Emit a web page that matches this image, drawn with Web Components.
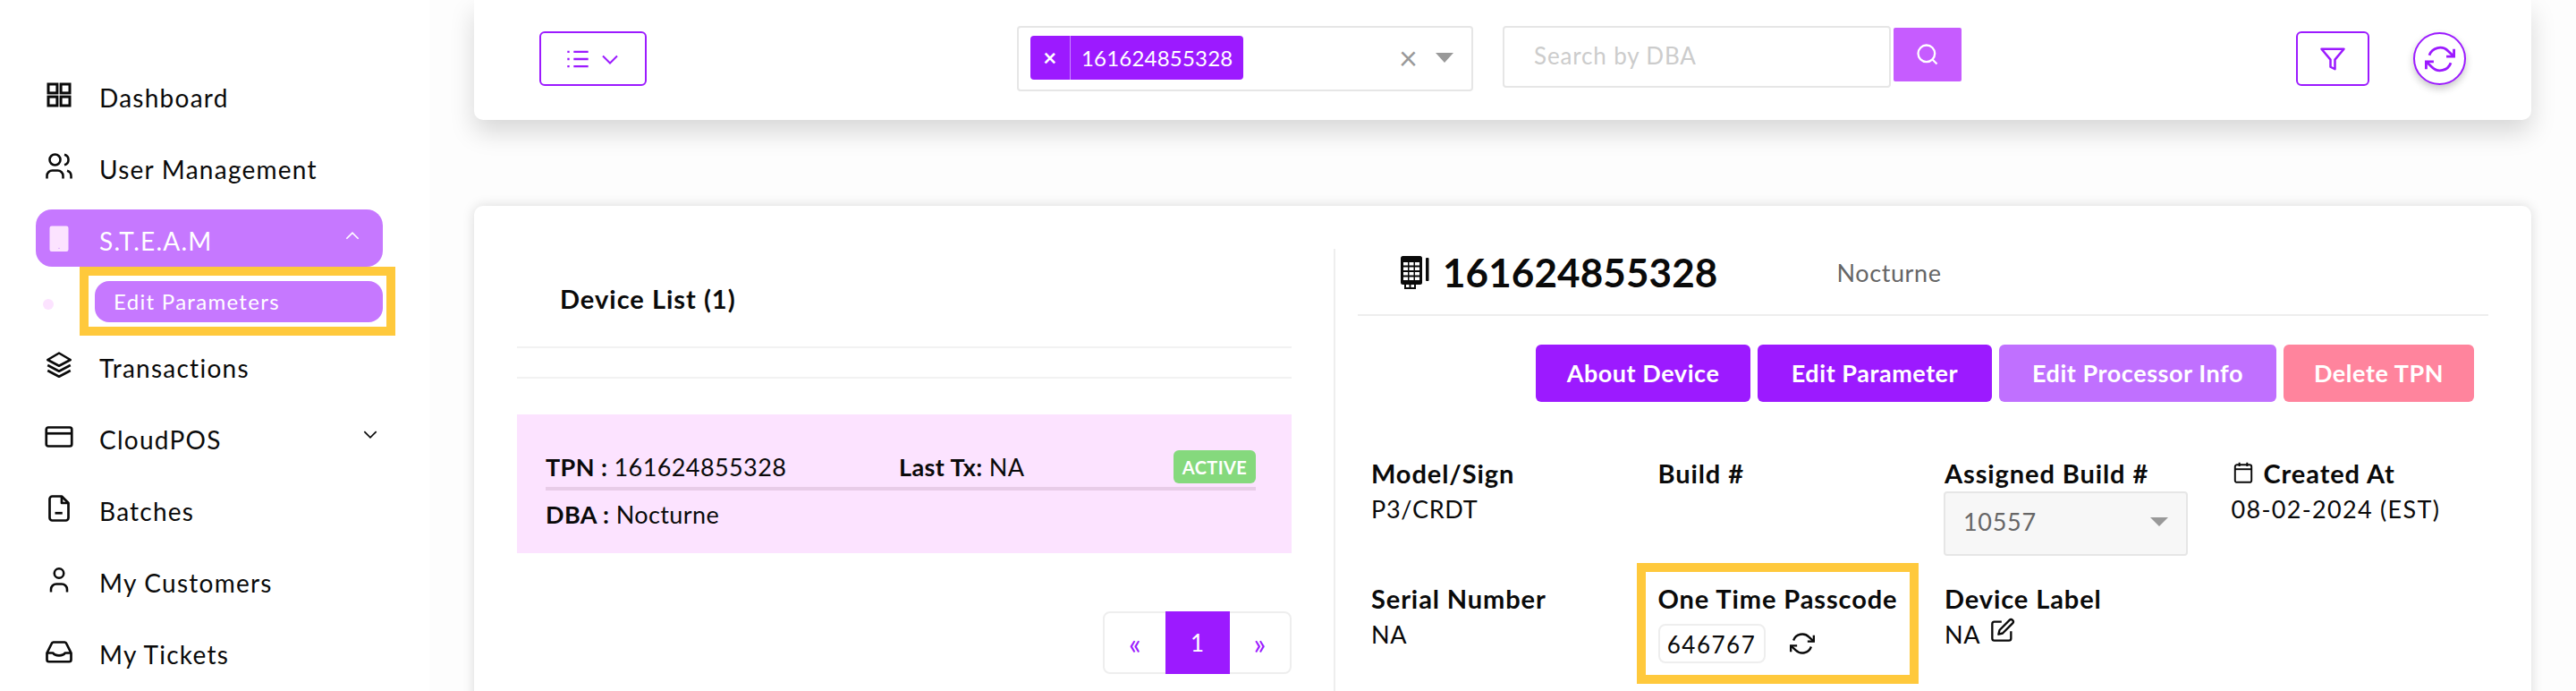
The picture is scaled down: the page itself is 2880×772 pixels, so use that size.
<!DOCTYPE html>
<html>
<head>
<meta charset="utf-8">
<title>Edit Parameters</title>
<style>
    html, body {
        margin: 0;
        height: 772px;
        overflow: hidden;
        background: #fdfdfd;
        font-family: Lato, "Liberation Sans", sans-serif;
        color: #0a0a0a;
    }
    #app {
        display: flex;
        width: 2880px;
        height: 772px;
        overflow: hidden;
    }
</style>
</head>
<body>
<div id="app">
    <x-sidebar></x-sidebar>
    <x-main></x-main>
</div>

<script>
const ICONS = {
    dashboard: '<g fill="none" stroke="currentColor" stroke-width="2"><rect x="4" y="4" width="6.6" height="6.6"/><rect x="13.4" y="4" width="6.6" height="6.6"/><rect x="4" y="13.4" width="6.6" height="6.6"/><rect x="13.4" y="13.4" width="6.6" height="6.6"/></g>',
    users: '<g fill="none" stroke="currentColor" stroke-width="1.7"><circle cx="9" cy="7" r="4"/><path d="M3 21v-2a4 4 0 0 1 4-4h4a4 4 0 0 1 4 4v2"/><path d="M16 3.13a4 4 0 0 1 0 7.75"/><path d="M21 21v-2a4 4 0 0 0-3-3.85"/></g>',
    phone: '<rect x="5" y="3" width="14" height="19" rx="1.5" fill="#fce3ff"/><circle cx="12" cy="19.5" r=".4" fill="#c678ff"/>',
    layers: '<g fill="none" stroke="currentColor" stroke-width="1.7" stroke-linejoin="round"><path d="M12 3 3.5 8 12 12.5 20.500 8Z"/><path d="M3.500 12 12 16.500 20.500 12"/><path d="M3.500 16 12 20.500 20.500 16"/></g>',
    card: '<g fill="none" stroke="currentColor" stroke-width="1.8"><rect x="2.500" y="5" width="19" height="14" rx="1.500"/><path d="M2.500 9.500h19"/></g>',
    file: '<g fill="none" stroke="currentColor" stroke-width="1.8" stroke-linejoin="round"><path d="M14 3H7a2 2 0 0 0-2 2v14a2 2 0 0 0 2 2h10a2 2 0 0 0 2-2V8z"/><path d="M14 3v5h5"/><path d="M9 15.500h5.500"/></g>',
    person: '<g fill="none" stroke="currentColor" stroke-width="1.7"><circle cx="12" cy="7" r="3.500"/><path d="M6 21v-2a4 4 0 0 1 4-4h4a4 4 0 0 1 4 4v2"/></g>',
    inbox: '<g fill="none" stroke="currentColor" stroke-width="1.800" stroke-linejoin="round"><path d="M3 13v5a1.500 1.500 0 0 0 1.500 1.500h15A1.500 1.500 0 0 0 21 18v-5l-3.500-7a1.500 1.500 0 0 0-1.300-1H7.800a1.500 1.500 0 0 0-1.300 1z"/><path d="M3 13h4.500c1.500 2.500 7.500 2.500 9 0H21"/></g>',
    up: '<path d="M4 16.500 12 8.500l8 8" fill="none" stroke="currentColor" stroke-width="2"/>',
    down: '<path d="M4 8.500l8 8 8-8" fill="none" stroke="currentColor" stroke-width="2"/>',
    list: '<g fill="none" stroke="currentColor" stroke-width="2"><path d="M8 5h14M8 12h14M8 19h14"/><path d="M2 5h2M2 12h2M2 19h2"/></g>',
    search: '<g fill="none" stroke="currentColor" stroke-width="2"><circle cx="11" cy="11" r="8"/><path d="M21 21l-4.300-4.300"/></g>',
    filter: '<path d="M22 3H2l8 9.460V19l4 2v-8.540z" fill="none" stroke="currentColor" stroke-width="2" stroke-linejoin="round"/>',
    refresh: '<g fill="none" stroke="currentColor" stroke-width="2"><path d="M23 4v6h-6"/><path d="M1 20v-6h6"/><path d="M3.510 9a9 9 0 0 1 14.850-3.360L23 10"/><path d="M1 14l4.640 4.360A9 9 0 0 0 20.490 15"/></g>',
    calendar: '<g fill="none" stroke="currentColor" stroke-width="1.800"><rect x="3.500" y="4" width="17" height="18" rx="2"/><path d="M3.500 8.500h17"/><path d="M8 1.500v4M16 1.500v4"/></g>',
    edit: '<g fill="none" stroke="currentColor" stroke-width="2" stroke-linejoin="round"><path d="M11 4H4a2 2 0 0 0-2 2v14a2 2 0 0 0 2 2h14a2 2 0 0 0 2-2v-7"/><path d="M18.500 2.500a2.120 2.120 0 0 1 3 3L12 15l-4 1 1-4z"/></g>',
    terminal: '<rect x="1" y="1" width="24" height="32" rx="2.500" fill="currentColor"/><g fill="#fff"><rect x="4" y="8" width="5" height="3.500"/><rect x="10.500" y="8" width="5" height="3.500"/><rect x="17" y="8" width="5" height="3.500"/><rect x="4" y="13.500" width="5" height="3.500"/><rect x="10.500" y="13.500" width="5" height="3.500"/><rect x="17" y="13.500" width="5" height="3.500"/><rect x="4" y="19" width="5" height="3.500"/><rect x="10.500" y="19" width="5" height="3.500"/><rect x="17" y="19" width="5" height="3.500"/><rect x="4" y="24.500" width="5" height="3.500"/><rect x="10.500" y="24.500" width="5" height="3.500"/><rect x="17" y="24.500" width="5" height="3.500"/></g><rect x="29" y="3" width="3.500" height="26" rx="1" fill="currentColor"/><path d="M6 33v4h11v-4M11.500 33v4" fill="none" stroke="currentColor" stroke-width="2"/>'
};

class XIcon extends HTMLElement {
    connectedCallback() {
        const size = this.getAttribute('size') || 24;
        const box = this.getAttribute('name') === 'terminal' ? '0 0 34 38' : '0 0 24 24';
        const height = this.getAttribute('height') || size;
        this.attachShadow({mode: 'open'}).innerHTML = `
<style>
    :host { display: inline-flex; flex: none; line-height: 0; }
</style>
<svg width="${size}" height="${height}" viewBox="${box}">${ICONS[this.getAttribute('name')]}</svg>`;
    }
}
customElements.define('x-icon', XIcon);

// yellow annotation frame drawn over whatever is slotted in
const highlightTemplate = document.createElement('template');
highlightTemplate.innerHTML = `
<style>
    :host { display: block; position: relative; }
    .frame {
        position: absolute;
        left: var(--left);
        top: var(--top);
        width: var(--w);
        height: var(--h);
        border: 10px solid #ffc93c;
        box-sizing: border-box;
    }
</style>
<slot></slot>
<div class="frame"></div>
`;
class XHighlight extends HTMLElement {
    constructor() {
        super();
        this.attachShadow({mode: 'open'});
        this.shadowRoot.appendChild(highlightTemplate.content.cloneNode(true));
    }
}
customElements.define('x-highlight', XHighlight);

const navItemTemplate = document.createElement('template');
navItemTemplate.innerHTML = `
<style>
    :host {
        display: flex;
        align-items: center;
        height: 64px;
        padding-left: 8px;
        border-radius: 18px;
        font-size: 28px;
        letter-spacing: 1.25px;
        color: #0a0a0a;
    }
    :host([active]) { background: #c678ff; color: #fff; }
    .icon { display: flex; width: 36px; justify-content: center; margin-right: 27px; }
    .label { flex: 1; padding-top: 5px; }
    .end { display: flex; }
</style>
<span class="icon"><slot name="icon"></slot></span>
<span class="label"><slot></slot></span>
<span class="end"><slot name="end"></slot></span>
`;
class XNavItem extends HTMLElement {
    constructor() {
        super();
        this.attachShadow({mode: 'open'});
        this.shadowRoot.appendChild(navItemTemplate.content.cloneNode(true));
    }
}
customElements.define('x-nav-item', XNavItem);

const sidebarTemplate = document.createElement('template');
sidebarTemplate.innerHTML = `
<style>
    :host {
        display: flex;
        flex: none;
        flex-direction: column;
        gap: 16px;
        box-sizing: border-box;
        width: 480px;
        height: 772px;
        padding: 74px 52px 0 40px;
        background: #fff;
    }
    .sub {
        display: flex;
        align-items: flex-start;
        height: 46px;
        padding-top: 16px;
    }
    .dot {
        width: 12px;
        height: 12px;
        margin: 20px 46px 0 8px;
        border-radius: 50%;
        background: #fce3ff;
    }
    x-highlight {
        --left: -17px; --top: -16px; --w: 353px; --h: 77px;
        flex: 1;
    }
    .pill {
        height: 46px;
        box-sizing: border-box;
        padding: 5px 0 0 21px;
        border-radius: 16px;
        background: #c678ff;
        color: #fff;
        font-size: 24px;
        line-height: 36px;
        letter-spacing: 1.3px;
    }
    .group { display: block; }
    .chev-up { margin-right: 24px; margin-top: -6px; }
    .chev-down { margin-right: 4px; margin-top: -6px; }
</style>
<x-nav-item><x-icon slot="icon" name="dashboard" size="36"></x-icon>Dashboard</x-nav-item>
<x-nav-item><x-icon slot="icon" name="users" size="36"></x-icon>User Management</x-nav-item>
<div class="group">
    <x-nav-item active><x-icon slot="icon" name="phone" size="36"></x-icon>S.T.E.A.M<x-icon class="chev-up" slot="end" name="up" size="20"></x-icon></x-nav-item>
    <div class="sub">
        <span class="dot"></span>
        <x-highlight><div class="pill">Edit Parameters</div></x-highlight>
    </div>
</div>
<x-nav-item><x-icon slot="icon" name="layers" size="36"></x-icon>Transactions</x-nav-item>
<x-nav-item><x-icon slot="icon" name="card" size="36"></x-icon>CloudPOS<x-icon class="chev-down" slot="end" name="down" size="20"></x-icon></x-nav-item>
<x-nav-item><x-icon slot="icon" name="file" size="36"></x-icon>Batches</x-nav-item>
<x-nav-item><x-icon slot="icon" name="person" size="36"></x-icon>My Customers</x-nav-item>
<x-nav-item><x-icon slot="icon" name="inbox" size="36"></x-icon>My Tickets</x-nav-item>
`;
class XSidebar extends HTMLElement {
    constructor() {
        super();
        this.attachShadow({mode: 'open'});
        this.shadowRoot.appendChild(sidebarTemplate.content.cloneNode(true));
    }
}
customElements.define('x-sidebar', XSidebar);

const filterBarTemplate = document.createElement('template');
filterBarTemplate.innerHTML = `
<style>
    :host {
        display: flex;
        align-items: center;
        box-sizing: border-box;
        height: 134px;
        padding: 0 73px 3px;
        background: #fff;
        border-radius: 0 0 10px 10px;
        box-shadow: 0 14px 28px rgba(0, 0, 0, .15);
    }
    button {
        display: flex;
        align-items: center;
        justify-content: center;
        padding: 0;
        background: #fff;
        color: #9c1aff;
        border: 2px solid #9c1aff;
        border-radius: 6px;
        height: 61px;
        box-sizing: border-box;
    }
    .menu { width: 120px; gap: 10px; }
    .center {
        display: flex;
        align-items: flex-start;
        margin-left: 414px;
        align-self: flex-start;
        margin-top: 29px;
    }
    .select {
        display: flex;
        align-items: center;
        box-sizing: border-box;
        width: 510px;
        height: 73px;
        padding: 10px 20px 13px 13px;
        border: 2px solid #e6e6e6;
        border-radius: 4px;
    }
    .tag {
        display: flex;
        height: 49px;
        background: #9c1aff;
        border-radius: 4px;
        color: #fff;
        font-size: 24px;
        line-height: 49px;
        letter-spacing: .2px;
    }
    .tag .x {
        width: 44px;
        text-align: center;
        border-right: 1px solid #c987ff;
        font-size: 26px;
        font-weight: 700;
    }
    .tag .val { padding: 0 12px; }
    .clear { margin-left: auto; color: #999; font-size: 36px; line-height: 1; }
    .caret {
        margin-left: 20px;
        border-left: 10px solid transparent;
        border-right: 10px solid transparent;
        border-top: 11px solid #999;
    }
    .search {
        box-sizing: border-box;
        width: 434px;
        height: 69px;
        margin-left: 33px;
        padding: 16px 0 0 33px;
        border: 2px solid #e6e6e6;
        border-radius: 4px;
        color: #ccc;
        font-size: 26px;
        line-height: 30px;
        letter-spacing: .85px;
    }
    .go {
        display: flex;
        align-items: center;
        justify-content: center;
        width: 76px;
        height: 60px;
        margin: 2px 0 0 3px;
        background: #c65cff;
        color: #fff;
        border-radius: 2px;
    }
    .right { display: flex; align-items: center; margin-left: auto; gap: 49px; }
    .filter { width: 82px; }
    .round {
        width: 59px;
        height: 59px;
        border-radius: 50%;
        box-shadow: 0 4px 8px rgba(0, 0, 0, .22);
    }
</style>
<button class="menu"><x-icon name="list" size="28"></x-icon><x-icon name="down" size="24"></x-icon></button>
<div class="center">
    <div class="select">
        <div class="tag"><span class="x">×</span><span class="val">161624855328</span></div>
        <span class="clear">×</span>
        <span class="caret"></span>
    </div>
    <div class="search">Search by DBA</div>
    <div class="go"><x-icon name="search" size="28"></x-icon></div>
</div>
<div class="right">
    <button class="filter"><x-icon name="filter" size="30"></x-icon></button>
    <button class="round"><x-icon name="refresh" size="34"></x-icon></button>
</div>
`;
class XFilterBar extends HTMLElement {
    constructor() {
        super();
        this.attachShadow({mode: 'open'});
        this.shadowRoot.appendChild(filterBarTemplate.content.cloneNode(true));
    }
}
customElements.define('x-filter-bar', XFilterBar);

const deviceListTemplate = document.createElement('template');
deviceListTemplate.innerHTML = `
<style>
    :host {
        display: block;
        flex: none;
        box-sizing: border-box;
        width: 961px;
        padding: 50px 47px 0 48px;
    }
    .title {
        box-sizing: border-box;
        height: 109px;
        padding: 37px 0 0 48px;
        border-bottom: 2px solid #f2f2f2;
        font-size: 29px;
        line-height: 34px;
        font-weight: 700;
        letter-spacing: 1px;
    }
    .spacer { height: 34px; box-sizing: border-box; border-bottom: 2px solid #f2f2f2; }
    .row {
        box-sizing: border-box;
        height: 155px;
        margin-top: 40px;
        padding: 40px 40px 0 32px;
        background: #fce3ff;
        font-size: 27px;
        letter-spacing: .4px;
    }
    .line { display: flex; align-items: center; height: 37px; }
    b { font-weight: 700; }
    .tpn { width: 395px; }
    .badge {
        margin-left: auto;
        width: 92px;
        height: 37px;
        border-radius: 6px;
        background: #85d97d;
        color: #fff;
        font-size: 20px;
        font-weight: 700;
        line-height: 39px;
        text-align: center;
    }
    .rule { height: 4px; margin: 4px 0 10px; background: #e8cce8; }
    .pager {
        display: flex;
        width: 211px;
        height: 70px;
        margin: 65px 0 0 auto;
        box-sizing: border-box;
        border: 2px solid #eee;
        border-radius: 8px;
        color: #9c1aff;
        font-size: 32px;
    }
    .pager span { display: flex; flex: 1; align-items: center; justify-content: center; }
    .pager .on {
        flex: none;
        width: 72px;
        margin: -2px 0;
        background: #9c1aff;
        color: #fff;
        font-size: 26px;
    }
</style>
<div class="title">Device List (1)</div>
<div class="spacer"></div>
<div class="row">
    <div class="line">
        <span class="tpn"><b>TPN :</b> 161624855328</span>
        <span><b>Last Tx:</b> NA</span>
        <span class="badge">ACTIVE</span>
    </div>
    <div class="rule"></div>
    <div><b>DBA :</b> Nocturne</div>
</div>
<div class="pager"><span>«</span><span class="on">1</span><span>»</span></div>
`;
class XDeviceList extends HTMLElement {
    constructor() {
        super();
        this.attachShadow({mode: 'open'});
        this.shadowRoot.appendChild(deviceListTemplate.content.cloneNode(true));
    }
}
customElements.define('x-device-list', XDeviceList);

const fieldTemplate = document.createElement('template');
fieldTemplate.innerHTML = `
<style>
    :host { display: block; font-size: 27px; }
    .label {
        display: flex;
        align-items: center;
        gap: 10px;
        height: 40px;
        font-size: 29px;
        font-weight: 700;
        letter-spacing: .9px;
    }
    .value { padding-top: 1px; line-height: 40px; letter-spacing: .7px; }
</style>
<div class="label"><slot name="icon"></slot><slot name="label"></slot></div>
<div class="value"><slot></slot></div>
`;
class XField extends HTMLElement {
    constructor() {
        super();
        this.attachShadow({mode: 'open'});
        this.shadowRoot.appendChild(fieldTemplate.content.cloneNode(true));
    }
}
customElements.define('x-field', XField);

const deviceDetailTemplate = document.createElement('template');
deviceDetailTemplate.innerHTML = `
<style>
    :host {
        display: block;
        flex: 1;
        min-width: 0;
        box-sizing: border-box;
        margin-top: 48px;
        padding: 0 48px 0 25px;
        border-left: 2px solid #eee;
    }
    .head {
        display: flex;
        align-items: center;
        box-sizing: border-box;
        height: 75px;
        padding: 8px 0 29px 47px;
        border-bottom: 2px solid #eee;
    }
    h1 { margin: 0 0 0 14px; font-size: 44px; font-weight: 700; line-height: 38px; letter-spacing: .1px; }
    .dba { margin-left: 133px; font-size: 27px; color: #666; letter-spacing: .6px; }
    .actions {
        display: flex;
        justify-content: flex-end;
        gap: 8px;
        margin-top: 32px;
        padding-right: 16px;
    }
    .actions span {
        display: flex;
        align-items: center;
        justify-content: center;
        box-sizing: border-box;
        height: 64px;
        padding-bottom: 2px;
        border-radius: 6px;
        background: #9c1aff;
        color: #fff;
        font-size: 27px;
        font-weight: 700;
        letter-spacing: .55px;
    }
    .actions .proc { background: #c070ff; }
    .actions .del { background: #ff849d; }
    .grid {
        display: grid;
        grid-template-columns: repeat(4, 320.5px);
        grid-auto-rows: 140px;
        margin: 59px 0 0 15px;
    }
    .select {
        display: flex;
        align-items: center;
        justify-content: space-between;
        box-sizing: border-box;
        width: 273px;
        height: 72px;
        margin: 0 0 0 -1px;
        padding: 0 20px 4px 20px;
        background: #f7f7f7;
        border: 2px solid #e6e6e6;
        border-radius: 4px;
        color: #666;
    }
    .caret {
        border-left: 10px solid transparent;
        border-right: 10px solid transparent;
        border-top: 10px solid #999;
    }
    x-highlight { --left: -24px; --top: -19px; --w: 315px; --h: 135px; }
    .otp { display: flex; align-items: center; margin-top: 8px; line-height: 1; }
    .code {
        box-sizing: border-box;
        width: 120px;
        height: 44px;
        border: 2px solid #eee;
        border-radius: 8px;
        font-size: 26px;
        line-height: 42px;
        text-align: center;
        letter-spacing: 1.500px;
    }
    .otp x-icon { margin-left: 27px; }
    .label-edit { display: flex; align-items: center; }
    .label-edit x-icon { margin: -10px 0 0 11px; }
    .date { letter-spacing: 1.3px; }
</style>
<div class="head">
    <x-icon name="terminal" size="34" height="38"></x-icon>
    <h1>161624855328</h1>
    <span class="dba">Nocturne</span>
</div>
<div class="actions">
    <span style="width:240px">About Device</span>
    <span style="width:262px">Edit Parameter</span>
    <span class="proc" style="width:310px">Edit Processor Info</span>
    <span class="del" style="width:213px">Delete TPN</span>
</div>
<div class="grid">
    <x-field><span slot="label">Model/Sign</span>P3/CRDT</x-field>
    <x-field><span slot="label">Build #</span></x-field>
    <x-field><span slot="label">Assigned Build #</span><div class="select">10557<span class="caret"></span></div></x-field>
    <x-field><x-icon slot="icon" name="calendar" size="26"></x-icon><span slot="label">Created At</span><span class="date">08-02-2024 (EST)</span></x-field>
    <x-field><span slot="label">Serial Number</span>NA</x-field>
    <x-highlight>
        <x-field><span slot="label">One Time Passcode</span>
            <div class="otp"><span class="code">646767</span><x-icon name="refresh" size="28"></x-icon></div>
        </x-field>
    </x-highlight>
    <x-field><span slot="label">Device Label</span><div class="label-edit">NA<x-icon name="edit" size="28"></x-icon></div></x-field>
</div>
`;
class XDeviceDetail extends HTMLElement {
    constructor() {
        super();
        this.attachShadow({mode: 'open'});
        this.shadowRoot.appendChild(deviceDetailTemplate.content.cloneNode(true));
    }
}
customElements.define('x-device-detail', XDeviceDetail);

const mainTemplate = document.createElement('template');
mainTemplate.innerHTML = `
<style>
    :host {
        display: block;
        flex: 1;
        box-sizing: border-box;
        height: 772px;
        padding: 0 50px;
        overflow: hidden;
    }
    .card {
        display: flex;
        height: 600px;
        margin-top: 96px;
        background: #fff;
        border-radius: 10px;
        box-shadow: 0 0 14px rgba(0, 0, 0, .14);
    }
</style>
<x-filter-bar></x-filter-bar>
<div class="card">
    <x-device-list></x-device-list>
    <x-device-detail></x-device-detail>
</div>
`;
class XMain extends HTMLElement {
    constructor() {
        super();
        this.attachShadow({mode: 'open'});
        this.shadowRoot.appendChild(mainTemplate.content.cloneNode(true));
    }
}
customElements.define('x-main', XMain);
</script>
</body>
</html>
